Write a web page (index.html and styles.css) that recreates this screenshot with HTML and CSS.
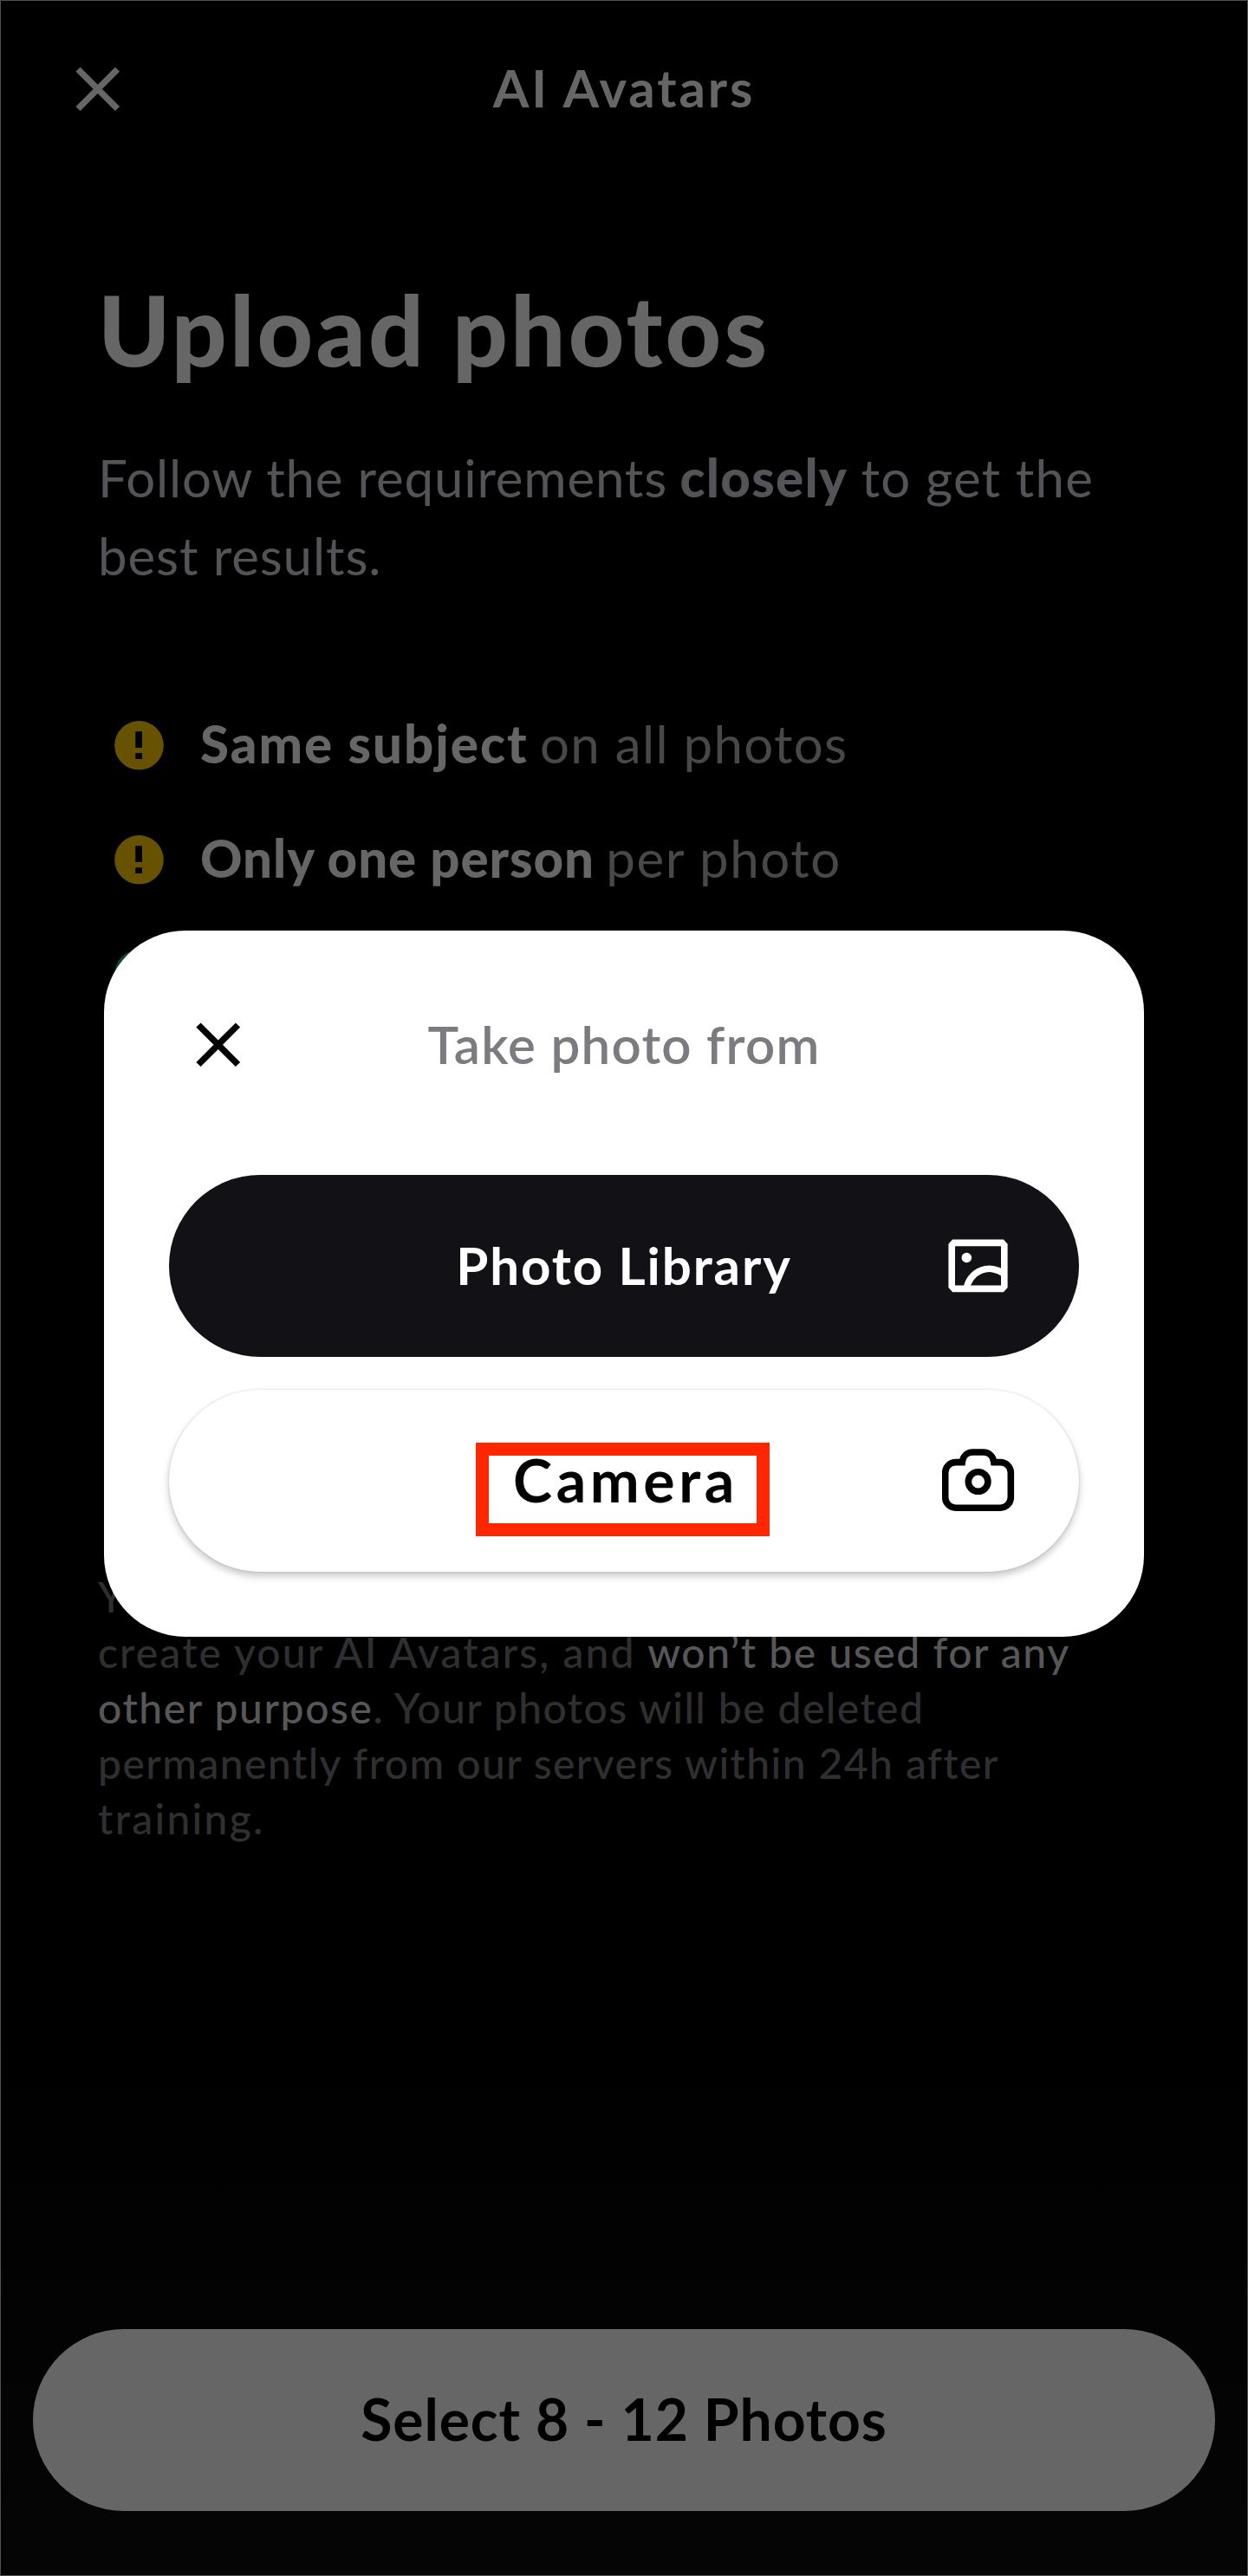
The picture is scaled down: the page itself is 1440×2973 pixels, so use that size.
FILE: index.html
```html
<!DOCTYPE html>
<html lang="en">
<head>
<meta charset="utf-8">
<title>AI Avatars</title>
<link rel="stylesheet" href="styles.css">
</head>
<body>
<div class="screen">
  <header class="topbar">
    <svg class="close" viewBox="0 0 52 52"><path d="M3 3L48.5 48.5M48.5 3L3 48.5"/></svg>
    <h1 class="topbar-title">AI Avatars</h1>
  </header>

  <main class="content">
    <h2 class="heading">Upload photos</h2>
    <p class="lead"><span class="lead-a">Follow the requirements</span> <strong>closely</strong> <span class="lead-b">to get the</span><br><span class="lead-c">best results.</span></p>

    <ul class="rules">
      <li class="rule">
        <svg class="badge" viewBox="0 0 58 58"><circle class="badge-warn" cx="28.5" cy="28.3" r="28.3"/><path class="badge-mark" d="M24.3 12.3h7.7v18.7h-7.7zM24.3 37.3h7.7v6.7h-7.7z"/></svg>
        <p><strong class="subject">Same subject</strong> <span class="photos">on all photos</span></p>
      </li>
      <li class="rule">
        <svg class="badge" viewBox="0 0 58 58"><circle class="badge-warn" cx="28.5" cy="28.3" r="28.3"/><path class="badge-mark" d="M24.3 12.3h7.7v18.7h-7.7zM24.3 37.3h7.7v6.7h-7.7z"/></svg>
        <p><strong class="person">Only one person</strong> <span class="photo">per photo</span></p>
      </li>
      <li class="rule">
        <svg class="badge" viewBox="0 0 58 58"><circle class="badge-ok" cx="28.5" cy="28.3" r="28.3"/></svg>
      </li>
    </ul>

    <p class="note">Y<br><span class="note-a">create your AI Avatars, and</span> <b>won’t be used for any<br>other purpose</b>. Your photos will be deleted<br>permanently from our servers within 24h after<br><span class="note-b">training.</span></p>
  </main>

  <footer class="footer">
    <button class="select">Select 8 - 12 Photos</button>
  </footer>

  <section class="dialog" role="dialog">
    <div class="dialog-head">
      <svg class="close" viewBox="0 0 52 52"><path d="M3 3L48.5 48.5M48.5 3L3 48.5"/></svg>
      <h3 class="dialog-title">Take photo from</h3>
    </div>
    <div class="options">
      <button class="option option-library">
        <span class="option-label">Photo Library</span>
        <svg class="option-icon" viewBox="0 0 84 74"><path d="M11.2 13.2L13.8 10.4H69.2L71.8 13.2V60.6L69.2 63.4H13.8L11.2 60.6Z"/><path d="M28.2 64A26.8 26.8 0 0 1 71.8 46.4"/><circle class="dot" cx="28.3" cy="27.5" r="5.8"/></svg>
      </button>
      <button class="option option-camera">
        <span class="option-label">Camera</span>
        <svg class="option-icon" viewBox="0 0 84 74"><path d="M15.7 15.6H23.2C24 8.6 29 4 35.5 4H47.5C54 4 59 8.6 59.8 15.6H67.3A12 12 0 0 1 79.3 27.6V56.2A12 12 0 0 1 67.3 68.2H15.7A12 12 0 0 1 3.7 56.2V27.6A12 12 0 0 1 15.7 15.6Z"/><circle cx="41.6" cy="38" r="11.3"/></svg>
        <span class="highlight"></span>
      </button>
    </div>
  </section>
</div>
</body>
</html>
```
FILE: styles.css
```css
* { box-sizing: border-box; }

body {
  margin: 0;
  background: #000;
  font-family: Lato, "Open Sans", sans-serif;
}

h1, h2, h3, p, ul { margin: 0; padding: 0; }

button {
  border: 0;
  padding: 0;
  font: inherit;
}

.screen {
  position: relative;
  display: flex;
  flex-direction: column;
  width: 1440px;
  height: 2973px;
  overflow: hidden;
  background: linear-gradient(#000 78%, #050505);
  box-shadow: inset 0 0 0 1px #505050;
}

/* Top bar */
.topbar,
.dialog-head {
  display: grid;
  grid-template-columns: 1fr auto 1fr;
  align-items: center;
}

.topbar {
  height: 205px;
  padding: 0 87px;
}

.close {
  width: 52px;
  height: 52px;
  fill: none;
  stroke: #666;
  stroke-width: 7.4;
}

.topbar-title {
  padding-bottom: 4px;
  color: #666;
  font-size: 60px;
  font-weight: 700;
  line-height: 72px;
  letter-spacing: 2.9px;
}

/* Page content */
.content {
  flex: 1;
  padding: 109px 100px 0 113px;
}

.heading {
  color: #666;
  font-size: 112px;
  font-weight: 900;
  line-height: 132px;
  letter-spacing: 3.2px;
}

.lead {
  margin-top: 60px;
  color: #545458;
  font-size: 60px;
  line-height: 90px;
  white-space: nowrap;
}

.lead strong {
  margin-left: -1px;
  font-weight: 900;
  letter-spacing: 1.3px;
}

.lead-a { letter-spacing: .82px; }
.lead-b { letter-spacing: 1.2px; }
.lead-c { letter-spacing: .9px; }

.rules {
  margin-top: 106px;
  padding-left: 19px;
  list-style: none;
}

.rule {
  display: flex;
  align-items: center;
  gap: 41px;
  height: 132px;
  color: #48484b;
  font-size: 60px;
  line-height: 132px;
  white-space: nowrap;
}

.rule strong {
  color: #666;
  font-weight: 900;
}

.subject { letter-spacing: 2px; }
.photos { margin-left: -2px; letter-spacing: 1.3px; }
.person { letter-spacing: .9px; }
.photo { margin-left: -2px; letter-spacing: 1.6px; }

.badge {
  width: 58px;
  height: 58px;
  margin-top: 6px;
}

.badge-warn { fill: #665200; }
.badge-ok { fill: #0b4a30; }
.badge-mark { fill: #000; }

.note {
  margin-top: 623px;
  color: #2f2f31;
  font-size: 48px;
  font-weight: 500;
  line-height: 64px;
  letter-spacing: 1.43px;
  white-space: nowrap;
}

.note b {
  color: #575759;
  font-weight: 500;
  letter-spacing: 1.55px;
}

.note-a { letter-spacing: 2.1px; }
.note-b { letter-spacing: 2.3px; }

/* Bottom action */
.footer { padding: 0 38px 75px; }

.select {
  display: block;
  width: 100%;
  height: 210px;
  padding-bottom: 3px;
  border-radius: 105px;
  background: #666;
  color: #000;
  font-size: 66px;
  font-weight: 700;
  letter-spacing: .9px;
}

/* Source picker */
.dialog {
  position: absolute;
  left: 120px;
  top: 1074px;
  width: 1200px;
  height: 815px;
  padding: 0 75px 75px;
  border-radius: 94px;
  background: #fff;
}

.dialog-head {
  height: 263px;
  padding: 0 31px;
}

.dialog .close { stroke: #000; }

.dialog-title {
  padding-bottom: 2px;
  color: #7b7b80;
  font-size: 60px;
  font-weight: 600;
  line-height: 72px;
  letter-spacing: 1.25px;
}

.options {
  display: flex;
  flex-direction: column;
  gap: 38px;
  margin-top: 19px;
}

.option {
  position: relative;
  display: grid;
  grid-template-columns: 1fr auto 1fr;
  align-items: center;
  height: 210px;
  padding: 0 74px;
  border-radius: 105px;
}

.option-label {
  grid-column: 2;
  padding-bottom: 3px;
  font-weight: 700;
}

.option-icon {
  justify-self: end;
  width: 84px;
  height: 74px;
  fill: none;
  stroke: currentColor;
  stroke-width: 7.6;
}

.option-icon .dot {
  fill: currentColor;
  stroke: none;
}

.option-library {
  background: #121116;
  color: #fff;
  font-size: 60px;
  letter-spacing: 1.9px;
}

.option-camera {
  background: #fff;
  box-shadow: 0 5px 9px rgba(0, 0, 0, .22), 0 0 3px rgba(0, 0, 0, .14);
  color: #000;
  font-size: 68px;
  letter-spacing: 4.6px;
}

.option-camera .option-label { padding-left: 4px; }

.highlight {
  position: absolute;
  left: 354px;
  top: 61px;
  width: 339px;
  height: 108px;
  border: 15px solid #ff2600;
}
```
